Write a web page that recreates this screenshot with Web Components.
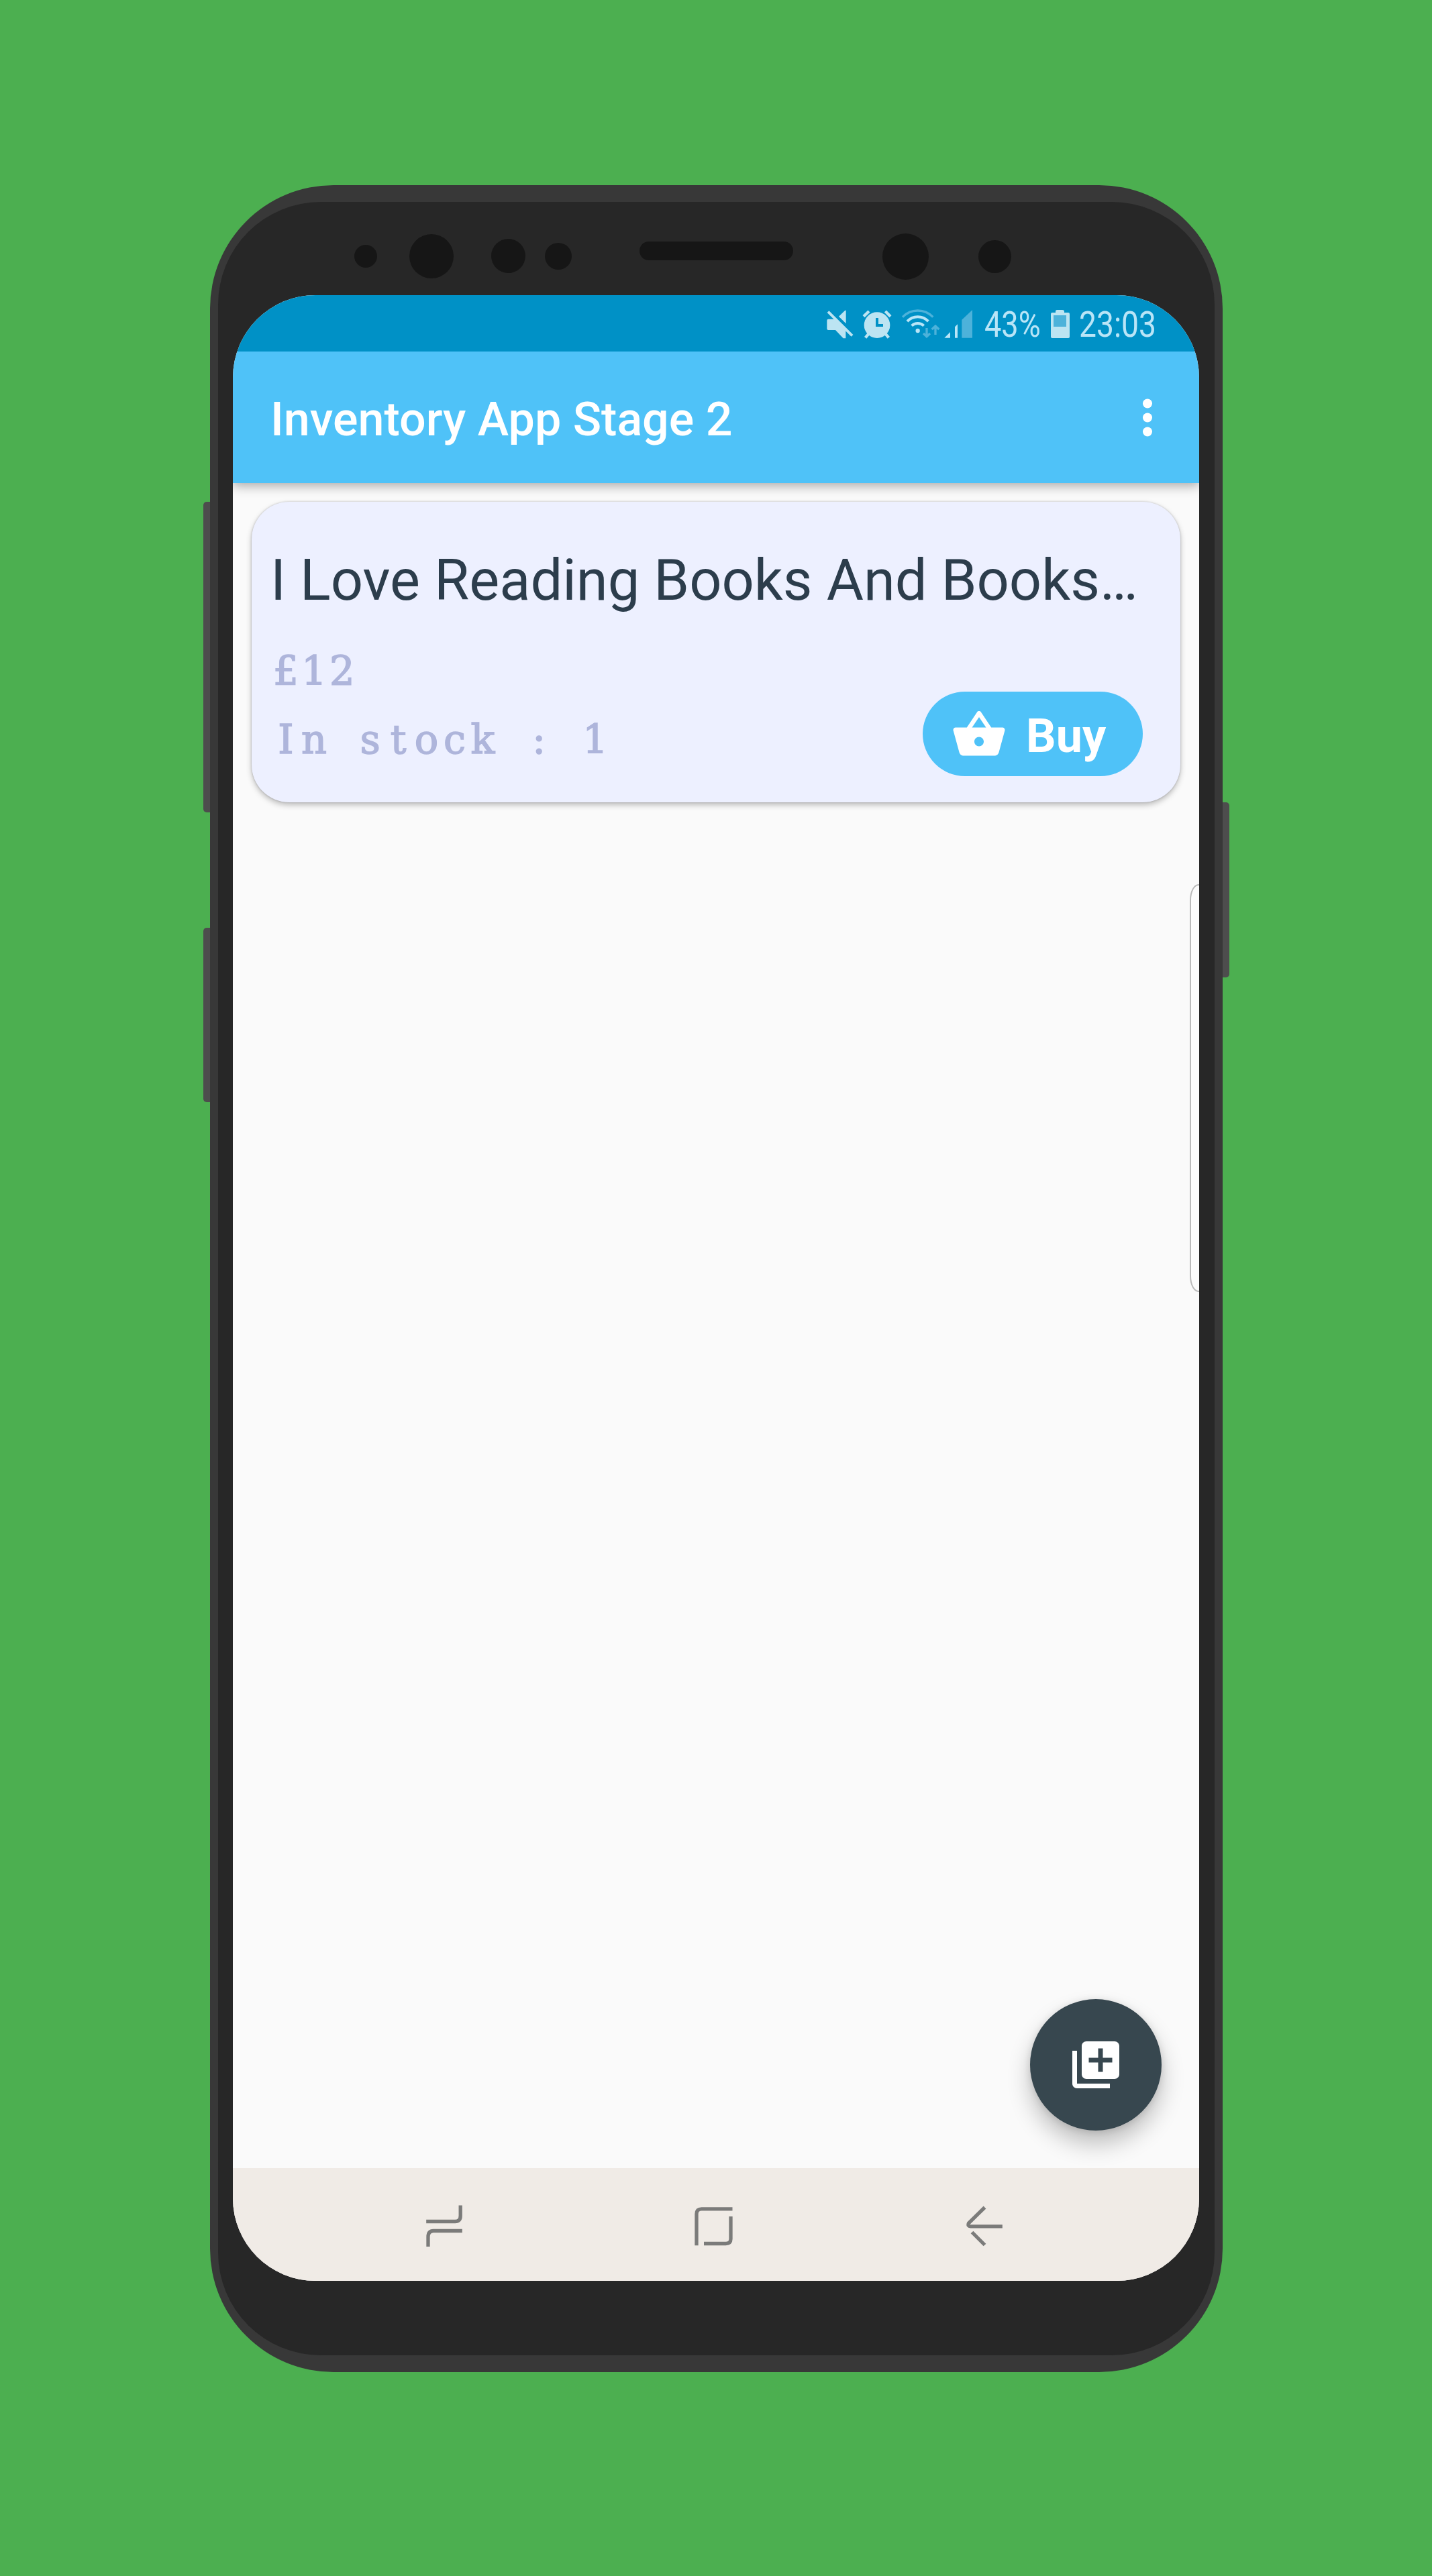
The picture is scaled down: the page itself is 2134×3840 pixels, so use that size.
<!DOCTYPE html>
<html lang="en">
<head>
<meta charset="utf-8">
<title>Inventory App Stage 2</title>
<style>
html,body{margin:0;padding:0}
body{width:2134px;height:3840px;background:#4caf50;font-family:Roboto,"Liberation Sans",sans-serif;overflow:hidden}
</style>
</head>
<body>
<phone-stage>
  <phone-frame>
    <status-bar battery="43%" clock="23:03"></status-bar>
    <app-bar>Inventory App Stage 2</app-bar>
    <app-content>
      <product-card>
        <span slot="title">I Love Reading Books And Books…</span>
        <mono-line slot="price" text="£12"></mono-line>
        <mono-line slot="stock" text="In stock : 1"></mono-line>
        <buy-button slot="action">Buy</buy-button>
      </product-card>
      <edge-handle slot="overlay"></edge-handle>
      <add-fab slot="overlay"></add-fab>
    </app-content>
    <nav-bar></nav-bar>
  </phone-frame>
</phone-stage>
<script>
const define = (name, render) => customElements.define(name, class extends HTMLElement {
  connectedCallback() {
    if (!this.shadowRoot) this.attachShadow({ mode: 'open' }).innerHTML = render(this);
  }
});

define('phone-stage', () => `
<style>
:host{display:flex;justify-content:center;box-sizing:border-box;width:2134px;height:3840px;padding-top:276px;background:#4caf50}
</style><slot></slot>`);

define('phone-frame', () => `
<style>
:host{display:flex;align-items:flex-start;height:3260px;width:1529px;margin-left:1px}
.keys{display:flex;flex-direction:column;width:10px;flex:none}
.keys i{display:block;background:#4d4d4d}
.l i{border-radius:5px 0 0 5px}.r i{border-radius:0 5px 5px 0}
.body{box-sizing:border-box;width:1509px;height:3260px;background:#383838;border-radius:184px;padding:25px 12px;flex:none}
.bezel{box-sizing:border-box;display:flex;flex-direction:column;height:3210px;background:#272727;border-radius:153px;padding:0 23px 0 22px}
.sensors{height:139px;flex:none;display:block}
.screen{display:flex;flex-direction:column;width:1440px;height:2960px;border-radius:123px;overflow:hidden;background:#fafafa}
</style>
<div class="keys l"><i style="height:463px;margin-top:472px"></i><i style="height:260px;margin-top:172px"></i></div>
<div class="body"><div class="bezel">
<svg class="sensors" width="1440" height="139" viewBox="347 301 1440 139" fill="#161616">
<circle cx="545" cy="382" r="17"/><circle cx="643" cy="382" r="33"/><circle cx="757.5" cy="381.5" r="25.5"/><circle cx="832" cy="382" r="20"/>
<rect x="953" y="360" width="229" height="28" rx="14"/><circle cx="1349.5" cy="382.5" r="34.5"/><circle cx="1482.5" cy="382.5" r="24.5"/></svg>
<div class="screen"><slot></slot></div>
</div></div>
<div class="keys r"><i style="height:261px;margin-top:920px"></i></div>`);

define('status-bar', el => `
<style>
:host{display:flex;height:84px;background:#0091c6;padding-left:873px;color:#b9e5f7}
svg{display:block;flex:none}
span{display:block;flex:none;font-size:54px;line-height:88px;white-space:pre;transform-origin:0 0}
.pct{width:99px;transform:scaleX(.835)}
.clk{width:130px;transform:scaleX(.855)}
</style>
<svg width="60" height="84" viewBox="1220 440 60 84"><g transform="translate(1220 450) scale(.33333)">
<path fill="#bce4f2" d="M43 77h28l50 50v36h-11L75 126H43q-6 0-6-6V83q0-6 6-6zM90 65l28-27h4v59z"/><path stroke="#bce4f2" stroke-width="12" d="M42 44L150 151"/></g></svg>
<svg width="60" height="84" viewBox="1280 440 60 84"><g transform="translate(1220 450) scale(.33333)">
<circle cx="261" cy="104" r="58" fill="#bce4f2"/><path stroke="#bce4f2" stroke-width="13" fill="none" d="M201 65l24-23M298 42l23 23M224 142l-15 18M298 142l15 18"/><path d="M261 72v33h27" fill="none" stroke="#0091c6" stroke-width="12"/></g></svg>
<svg width="62" height="84" viewBox="1340 440 62 84"><g transform="translate(1220 450) scale(.33333)" fill="none">
<path stroke="#4db2da" stroke-width="10" d="M375 68a94 94 0 0 1 136 0"/><g stroke="#b9e5f7" stroke-width="12"><path d="M396 87a65 65 0 0 1 94 0M416 107a39 39 0 0 1 54 0"/></g><circle cx="443" cy="129" r="9.500" fill="#b9e5f7"/>
<path stroke="#4db2da" stroke-width="10" d="M483 117v37M468 141l15 14 15-14M522 147v-37M506 123l16-15 16 15"/></g></svg>
<svg width="65" height="84" viewBox="1402 440 65 84"><g transform="translate(1220 450) scale(.33333)">
<path fill="#b9e5f7" d="M562 161l26-26v26zM609 161v-49l12-12v61z"/><path fill="#4db2da" d="M640 161V80l47-44v125z"/></g></svg>
<span class="pct">${el.getAttribute('battery')}</span>
<svg width="42" height="84" viewBox="1566 440 42 84"><path fill="#bce4f2" d="M1573 466v-2q0-2 2-2h8q3 0 3 2v2h6q2 0 2 2v34q0 2-2 2h-24q-2 0-2-2v-34q0-2 2-2z"/><path fill="#4db2da" d="M1570 470h19v17h-19z"/></svg>
<span class="clk">${el.getAttribute('clock')}</span>`);

define('app-bar', () => `
<style>
:host{display:flex;align-items:center;justify-content:space-between;box-sizing:border-box;height:196px;flex:none;background:#4fc2f8;color:#fff;padding:5px 66px 0 56px;font-size:70px;font-weight:500;line-height:84px;white-space:nowrap;position:relative;z-index:1;box-shadow:0 4px 16px rgba(0,0,0,.34);clip-path:inset(0 0 -40px 0)}
svg{display:block}
</style><slot></slot>
<svg width="22" height="70" viewBox="0 0 22 70" fill="#fff"><circle cx="11" cy="11.500" r="7"/><circle cx="11" cy="32.500" r="7"/><circle cx="11" cy="53.500" r="7"/></svg>`);

define('app-content', () => `
<style>
:host{display:block;position:relative;flex:1;background:#fafafa;padding:28px;overflow:hidden}
</style><slot></slot><slot name="overlay"></slot>`);

define('product-card', () => `
<style>
:host{display:flex;flex-direction:column;box-sizing:border-box;width:1384px;height:448px;border-radius:56px;background:#edf0ff;padding:68px 56px 0 28px;box-shadow:0 4px 9px rgba(0,0,0,.25),0 0 3px rgba(0,0,0,.2)}
.t{font-size:84.800px;line-height:99px;height:97px;color:#2c3d4c;white-space:nowrap}
.row{display:flex;justify-content:space-between}
.lines{display:flex;flex-direction:column;padding-top:52px}
.act{padding-top:118px}
</style>
<div class="t"><slot name="title"></slot></div>
<div class="row"><div class="lines"><slot name="price"></slot><slot name="stock"></slot></div><div class="act"><slot name="action"></slot></div></div>`);

define('mono-line', el => {
  const t = el.getAttribute('text');
  const xs = [...t].map((_, i) => (23 + i * 41.9).toFixed(1)).join(' ');
  return `
<style>
:host{display:block;height:102px}
text{font-family:"DejaVu Serif",serif;font-size:59px;fill:#aeb5db;stroke:#aeb5db;stroke-width:1.600px;text-anchor:middle;white-space:pre}
</style>
<svg width="520" height="102" viewBox="0 0 520 102"><text x="${xs}" y="56">${t}</text></svg>`;
});

define('buy-button', () => `
<style>
:host{display:flex;align-items:center;box-sizing:border-box;width:328px;height:126px;border-radius:63px;background:#4fc2f8;color:#fff;padding-left:42px;gap:28px;font-size:70px;line-height:126px;font-weight:700}
svg{display:block;margin-top:1px}
span{padding-top:6px}
</style>
<svg width="84" height="84" viewBox="0 0 24 24" fill="#fff"><path d="M17.210 9l-4.380-6.560c-.190-.280-.510-.420-.830-.420-.320 0-.640.140-.830.430L6.790 9H2c-.550 0-1 .450-1 1 0 .090.010.180.040.270l2.540 9.270c.230.840 1 1.460 1.920 1.460h13c.920 0 1.690-.620 1.930-1.460l2.540-9.270L23 10c0-.550-.450-1-1-1h-4.790zM9 9l3-4.400L15 9H9zm3 8c-1.100 0-2-.900-2-2s.900-2 2-2 2 .900 2 2-.900 2-2 2z"/></svg>
<span><slot></slot></span>`);

define('edge-handle', () => `
<style>
:host{display:block;position:absolute;right:-20px;top:598px;box-sizing:border-box;width:34px;height:608px;border:2px solid #bababa;border-radius:13px / 24px;background:#fcfcfc}
</style>`);

define('add-fab', () => `
<style>
:host{display:flex;align-items:center;justify-content:center;position:absolute;right:56px;bottom:56px;width:196px;height:196px;border-radius:50%;background:#37474f;box-shadow:0 20px 34px rgba(0,0,0,.24),0 2px 12px rgba(0,0,0,.12)}
svg{display:block}
</style>
<svg width="84" height="84" viewBox="0 0 24 24" fill="#fff"><path d="M4 6H2v14c0 1.100.900 2 2 2h14v-2H4V6zm16-4H8c-1.100 0-2 .900-2 2v12c0 1.100.900 2 2 2h12c1.100 0 2-.900 2-2V4c0-1.100-.900-2-2-2zm-1 9h-4v4h-2v-4H9V9h4V5h2v4h4v2z"/></svg>`);

define('nav-bar', () => `
<style>
:host{display:flex;align-items:center;justify-content:space-between;box-sizing:border-box;height:168px;flex:none;background:#f0ebe6;padding:4px 286px 0 278px;position:relative}
svg{display:block;fill:none;stroke:#7b7b7a;stroke-width:5.300}
</style>
<svg width="74" height="80" viewBox="625 3278 74 80"><path d="M686.200 3287.500V3303q0 8.500-8 8.500H635.200M688.800 3325.500H646q-8 0-8 9V3349"/></svg>
<svg width="74" height="80" viewBox="1026 3278 74 80"><path d="M1091.500 3292.800H1045.500q-7.500 0-7.500 7.500V3347.300M1089 3304V3337.500q0 7-7.500 7H1049"/></svg>
<svg width="74" height="80" viewBox="1427 3278 74 80"><path d="M1467.500 3290.500L1443.500 3314q-2 5 3 4.800H1493.800M1448.500 3327.500L1467.500 3346.500"/></svg>`);
</script>
</body>
</html>
